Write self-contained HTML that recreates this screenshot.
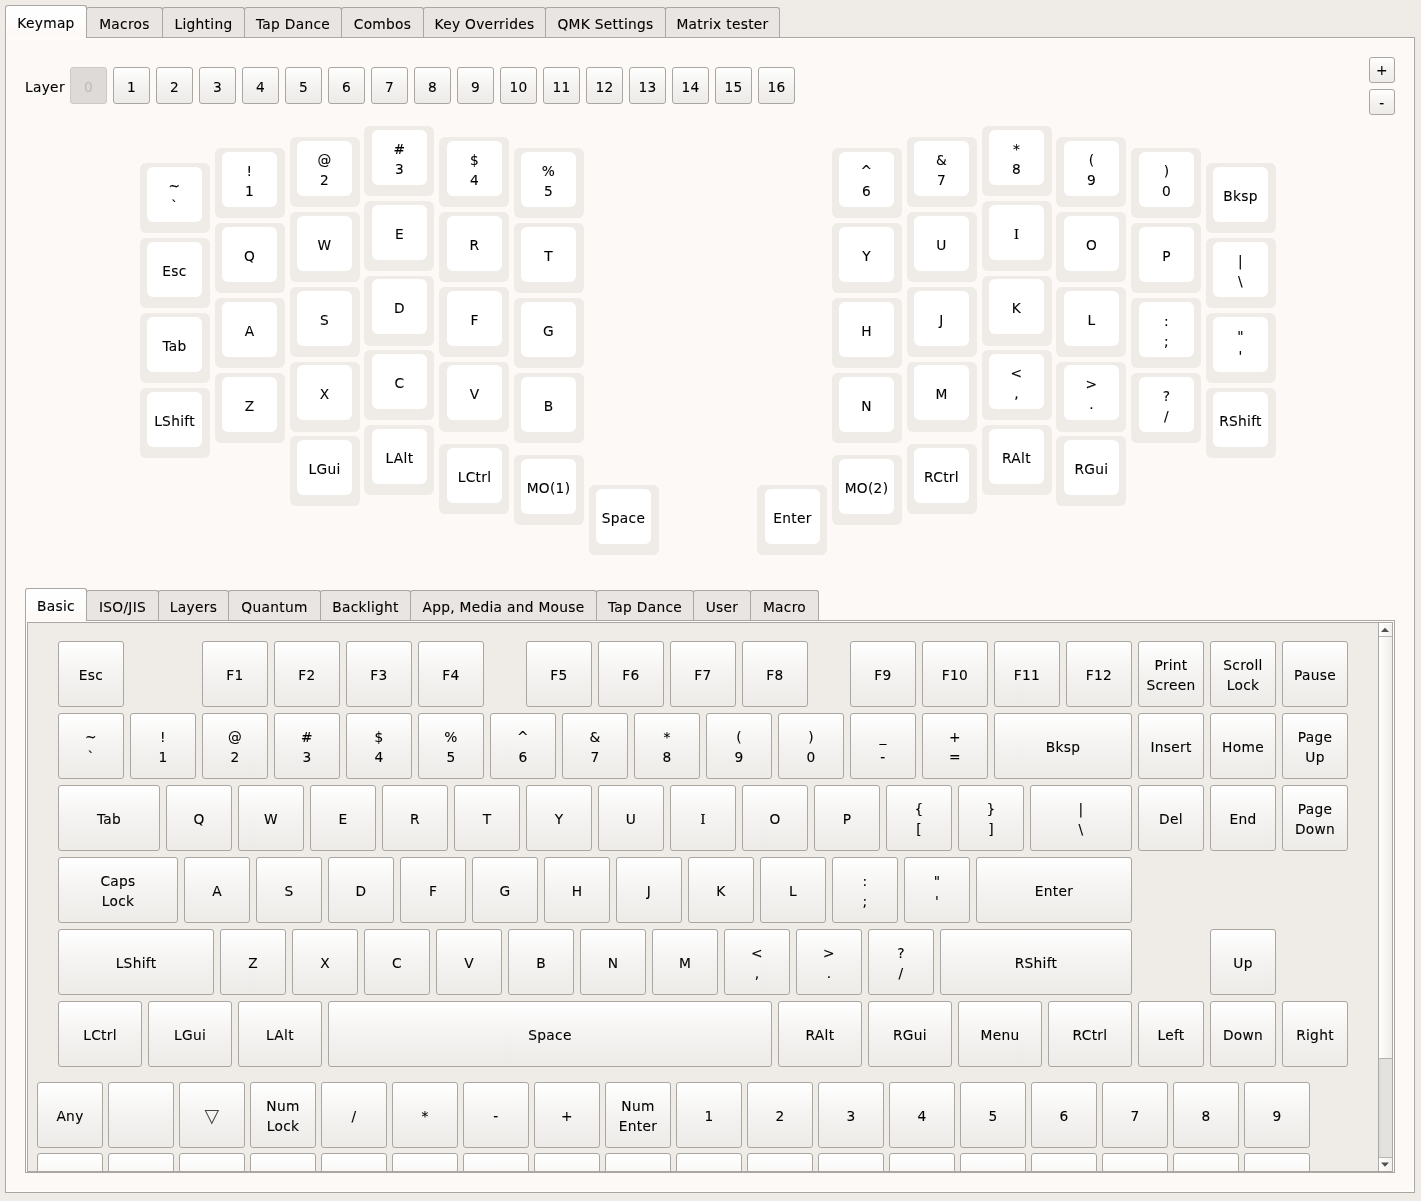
<!DOCTYPE html>
<html><head><meta charset="utf-8"><title>Vial</title><style>
*{box-sizing:border-box;margin:0;padding:0}
html,body{width:1421px;height:1201px;overflow:hidden;background:#efebe7;}
body{position:relative;font-family:"DejaVu Sans", "Liberation Sans", sans-serif;font-size:13.75px;color:#000;line-height:20px;letter-spacing:0.3px;-webkit-text-stroke:0.1px #000}
.abs{position:absolute}
.pane{position:absolute;background:#fcf9f6;border:1px solid #aaa6a2;box-shadow:inset 0 0 0 1px rgba(255,255,255,.75)}
.tab{position:absolute;border:1px solid #aaa6a2;border-bottom:none;border-radius:3px 3px 0 0;background:#e9e5e2;display:flex;align-items:center;justify-content:center;white-space:nowrap}
.tab.sel{background:linear-gradient(#ffffff 0%,#fdfcfb 70%,#fcf9f6 76%);z-index:2;box-shadow:inset 1px 1px 0 rgba(255,255,255,.8)}
.btn{position:absolute;border:1px solid #aaa6a2;border-radius:3px;background:linear-gradient(#ffffff,#f4f3f1 50%,#edebe8);display:flex;align-items:center;justify-content:center;text-align:center;white-space:pre-line}
.btn.dis{background:#dedad7;border-color:#cdc9c5;color:#bdbab7;-webkit-text-stroke:0}
.ko{position:absolute;background:#efebe7;border-radius:6px}
.ki{position:absolute;background:#fff;border-radius:6px;display:flex;align-items:center;justify-content:center;text-align:center;white-space:pre-line}
.t{position:relative;top:0.5px}
.ki .t{top:1.2px}
#root{position:absolute;left:0;top:0;width:1421px;height:1201px;will-change:transform}
</style></head><body>
<div id="root">
<div class="pane" style="left:5px;top:37px;width:1410px;height:1156px"></div>
<div class="tab sel" style="left:5px;top:5px;width:82px;height:33px"><span class="t">Keymap</span></div>
<div class="tab" style="left:86px;top:7px;width:77px;height:30px"><span class="t" style="top:1px">Macros</span></div>
<div class="tab" style="left:162px;top:7px;width:83px;height:30px"><span class="t" style="top:1px">Lighting</span></div>
<div class="tab" style="left:244px;top:7px;width:98px;height:30px"><span class="t" style="top:1px">Tap Dance</span></div>
<div class="tab" style="left:341px;top:7px;width:83px;height:30px"><span class="t" style="top:1px">Combos</span></div>
<div class="tab" style="left:423px;top:7px;width:123px;height:30px"><span class="t" style="top:1px">Key Overrides</span></div>
<div class="tab" style="left:545px;top:7px;width:121px;height:30px"><span class="t" style="top:1px">QMK Settings</span></div>
<div class="tab" style="left:665px;top:7px;width:115px;height:30px"><span class="t" style="top:1px">Matrix tester</span></div>
<div class="abs" style="left:25px;top:76px;white-space:nowrap"><span class="t">Layer</span></div>
<div class="btn dis" style="left:70px;top:67px;width:37px;height:37px"><span class="t" style="top:1.5px">0</span></div>
<div class="btn" style="left:113px;top:67px;width:37px;height:37px"><span class="t" style="top:1.5px">1</span></div>
<div class="btn" style="left:156px;top:67px;width:37px;height:37px"><span class="t" style="top:1.5px">2</span></div>
<div class="btn" style="left:199px;top:67px;width:37px;height:37px"><span class="t" style="top:1.5px">3</span></div>
<div class="btn" style="left:242px;top:67px;width:37px;height:37px"><span class="t" style="top:1.5px">4</span></div>
<div class="btn" style="left:285px;top:67px;width:37px;height:37px"><span class="t" style="top:1.5px">5</span></div>
<div class="btn" style="left:328px;top:67px;width:37px;height:37px"><span class="t" style="top:1.5px">6</span></div>
<div class="btn" style="left:371px;top:67px;width:37px;height:37px"><span class="t" style="top:1.5px">7</span></div>
<div class="btn" style="left:414px;top:67px;width:37px;height:37px"><span class="t" style="top:1.5px">8</span></div>
<div class="btn" style="left:457px;top:67px;width:37px;height:37px"><span class="t" style="top:1.5px">9</span></div>
<div class="btn" style="left:500px;top:67px;width:37px;height:37px"><span class="t" style="top:1.5px">10</span></div>
<div class="btn" style="left:543px;top:67px;width:37px;height:37px"><span class="t" style="top:1.5px">11</span></div>
<div class="btn" style="left:586px;top:67px;width:37px;height:37px"><span class="t" style="top:1.5px">12</span></div>
<div class="btn" style="left:629px;top:67px;width:37px;height:37px"><span class="t" style="top:1.5px">13</span></div>
<div class="btn" style="left:672px;top:67px;width:37px;height:37px"><span class="t" style="top:1.5px">14</span></div>
<div class="btn" style="left:715px;top:67px;width:37px;height:37px"><span class="t" style="top:1.5px">15</span></div>
<div class="btn" style="left:758px;top:67px;width:37px;height:37px"><span class="t" style="top:1.5px">16</span></div>
<div class="btn" style="left:1369px;top:57px;width:26px;height:26px"><span class="t" style="top:-0.5px">+</span></div>
<div class="btn" style="left:1369px;top:89px;width:26px;height:26px"><span class="t">-</span></div>
<div class="ko" style="left:140px;top:163px;width:70px;height:70px"></div>
<div class="ki" style="left:147px;top:167px;width:55px;height:55px"><span class="t">~
`</span></div>
<div class="ko" style="left:140px;top:238px;width:70px;height:70px"></div>
<div class="ki" style="left:147px;top:242px;width:55px;height:55px"><span class="t">Esc</span></div>
<div class="ko" style="left:140px;top:313px;width:70px;height:70px"></div>
<div class="ki" style="left:147px;top:317px;width:55px;height:55px"><span class="t">Tab</span></div>
<div class="ko" style="left:140px;top:388px;width:70px;height:70px"></div>
<div class="ki" style="left:147px;top:392px;width:55px;height:55px"><span class="t">LShift</span></div>
<div class="ko" style="left:215px;top:148px;width:70px;height:70px"></div>
<div class="ki" style="left:222px;top:152px;width:55px;height:55px"><span class="t">!
1</span></div>
<div class="ko" style="left:215px;top:223px;width:70px;height:70px"></div>
<div class="ki" style="left:222px;top:227px;width:55px;height:55px"><span class="t">Q</span></div>
<div class="ko" style="left:215px;top:298px;width:70px;height:70px"></div>
<div class="ki" style="left:222px;top:302px;width:55px;height:55px"><span class="t">A</span></div>
<div class="ko" style="left:215px;top:373px;width:70px;height:70px"></div>
<div class="ki" style="left:222px;top:377px;width:55px;height:55px"><span class="t">Z</span></div>
<div class="ko" style="left:290px;top:137px;width:70px;height:70px"></div>
<div class="ki" style="left:297px;top:141px;width:55px;height:55px"><span class="t">@
2</span></div>
<div class="ko" style="left:290px;top:212px;width:70px;height:70px"></div>
<div class="ki" style="left:297px;top:216px;width:55px;height:55px"><span class="t">W</span></div>
<div class="ko" style="left:290px;top:287px;width:70px;height:70px"></div>
<div class="ki" style="left:297px;top:291px;width:55px;height:55px"><span class="t">S</span></div>
<div class="ko" style="left:290px;top:362px;width:70px;height:70px"></div>
<div class="ki" style="left:297px;top:365px;width:55px;height:55px"><span class="t">X</span></div>
<div class="ko" style="left:364px;top:126px;width:70px;height:70px"></div>
<div class="ki" style="left:372px;top:130px;width:55px;height:55px"><span class="t">#
3</span></div>
<div class="ko" style="left:364px;top:201px;width:70px;height:70px"></div>
<div class="ki" style="left:372px;top:205px;width:55px;height:55px"><span class="t">E</span></div>
<div class="ko" style="left:364px;top:276px;width:70px;height:70px"></div>
<div class="ki" style="left:372px;top:279px;width:55px;height:55px"><span class="t">D</span></div>
<div class="ko" style="left:364px;top:350px;width:70px;height:70px"></div>
<div class="ki" style="left:372px;top:354px;width:55px;height:55px"><span class="t">C</span></div>
<div class="ko" style="left:439px;top:137px;width:70px;height:70px"></div>
<div class="ki" style="left:447px;top:141px;width:55px;height:55px"><span class="t">$
4</span></div>
<div class="ko" style="left:439px;top:212px;width:70px;height:70px"></div>
<div class="ki" style="left:447px;top:216px;width:55px;height:55px"><span class="t">R</span></div>
<div class="ko" style="left:439px;top:287px;width:70px;height:70px"></div>
<div class="ki" style="left:447px;top:291px;width:55px;height:55px"><span class="t">F</span></div>
<div class="ko" style="left:439px;top:362px;width:70px;height:70px"></div>
<div class="ki" style="left:447px;top:365px;width:55px;height:55px"><span class="t">V</span></div>
<div class="ko" style="left:514px;top:148px;width:70px;height:70px"></div>
<div class="ki" style="left:521px;top:152px;width:55px;height:55px"><span class="t">%
5</span></div>
<div class="ko" style="left:514px;top:223px;width:70px;height:70px"></div>
<div class="ki" style="left:521px;top:227px;width:55px;height:55px"><span class="t">T</span></div>
<div class="ko" style="left:514px;top:298px;width:70px;height:70px"></div>
<div class="ki" style="left:521px;top:302px;width:55px;height:55px"><span class="t">G</span></div>
<div class="ko" style="left:514px;top:373px;width:70px;height:70px"></div>
<div class="ki" style="left:521px;top:377px;width:55px;height:55px"><span class="t">B</span></div>
<div class="ko" style="left:290px;top:436px;width:70px;height:70px"></div>
<div class="ki" style="left:297px;top:440px;width:55px;height:55px"><span class="t">LGui</span></div>
<div class="ko" style="left:364px;top:425px;width:70px;height:70px"></div>
<div class="ki" style="left:372px;top:429px;width:55px;height:55px"><span class="t">LAlt</span></div>
<div class="ko" style="left:439px;top:444px;width:70px;height:70px"></div>
<div class="ki" style="left:447px;top:448px;width:55px;height:55px"><span class="t">LCtrl</span></div>
<div class="ko" style="left:514px;top:455px;width:70px;height:70px"></div>
<div class="ki" style="left:521px;top:459px;width:55px;height:55px"><span class="t">MO(1)</span></div>
<div class="ko" style="left:589px;top:485px;width:70px;height:70px"></div>
<div class="ki" style="left:596px;top:489px;width:55px;height:55px"><span class="t">Space</span></div>
<div class="ko" style="left:832px;top:148px;width:70px;height:70px"></div>
<div class="ki" style="left:839px;top:152px;width:55px;height:55px"><span class="t">^
6</span></div>
<div class="ko" style="left:832px;top:223px;width:70px;height:70px"></div>
<div class="ki" style="left:839px;top:227px;width:55px;height:55px"><span class="t">Y</span></div>
<div class="ko" style="left:832px;top:298px;width:70px;height:70px"></div>
<div class="ki" style="left:839px;top:302px;width:55px;height:55px"><span class="t">H</span></div>
<div class="ko" style="left:832px;top:373px;width:70px;height:70px"></div>
<div class="ki" style="left:839px;top:377px;width:55px;height:55px"><span class="t">N</span></div>
<div class="ko" style="left:907px;top:137px;width:70px;height:70px"></div>
<div class="ki" style="left:914px;top:141px;width:55px;height:55px"><span class="t">&amp;
7</span></div>
<div class="ko" style="left:907px;top:212px;width:70px;height:70px"></div>
<div class="ki" style="left:914px;top:216px;width:55px;height:55px"><span class="t">U</span></div>
<div class="ko" style="left:907px;top:287px;width:70px;height:70px"></div>
<div class="ki" style="left:914px;top:291px;width:55px;height:55px"><span class="t">J</span></div>
<div class="ko" style="left:907px;top:362px;width:70px;height:70px"></div>
<div class="ki" style="left:914px;top:365px;width:55px;height:55px"><span class="t">M</span></div>
<div class="ko" style="left:982px;top:126px;width:70px;height:70px"></div>
<div class="ki" style="left:989px;top:130px;width:55px;height:55px"><span class="t">*
8</span></div>
<div class="ko" style="left:982px;top:201px;width:70px;height:70px"></div>
<div class="ki" style="left:989px;top:205px;width:55px;height:55px"><span class="t" style="font-family:'DejaVu Serif','Liberation Serif',serif">I</span></div>
<div class="ko" style="left:982px;top:276px;width:70px;height:70px"></div>
<div class="ki" style="left:989px;top:279px;width:55px;height:55px"><span class="t">K</span></div>
<div class="ko" style="left:982px;top:350px;width:70px;height:70px"></div>
<div class="ki" style="left:989px;top:354px;width:55px;height:55px"><span class="t">&lt;
,</span></div>
<div class="ko" style="left:1056px;top:137px;width:70px;height:70px"></div>
<div class="ki" style="left:1064px;top:141px;width:55px;height:55px"><span class="t">(
9</span></div>
<div class="ko" style="left:1056px;top:212px;width:70px;height:70px"></div>
<div class="ki" style="left:1064px;top:216px;width:55px;height:55px"><span class="t">O</span></div>
<div class="ko" style="left:1056px;top:287px;width:70px;height:70px"></div>
<div class="ki" style="left:1064px;top:291px;width:55px;height:55px"><span class="t">L</span></div>
<div class="ko" style="left:1056px;top:362px;width:70px;height:70px"></div>
<div class="ki" style="left:1064px;top:365px;width:55px;height:55px"><span class="t">&gt;
.</span></div>
<div class="ko" style="left:1131px;top:148px;width:70px;height:70px"></div>
<div class="ki" style="left:1139px;top:152px;width:55px;height:55px"><span class="t">)
0</span></div>
<div class="ko" style="left:1131px;top:223px;width:70px;height:70px"></div>
<div class="ki" style="left:1139px;top:227px;width:55px;height:55px"><span class="t">P</span></div>
<div class="ko" style="left:1131px;top:298px;width:70px;height:70px"></div>
<div class="ki" style="left:1139px;top:302px;width:55px;height:55px"><span class="t">:
;</span></div>
<div class="ko" style="left:1131px;top:373px;width:70px;height:70px"></div>
<div class="ki" style="left:1139px;top:377px;width:55px;height:55px"><span class="t">?
/</span></div>
<div class="ko" style="left:1206px;top:163px;width:70px;height:70px"></div>
<div class="ki" style="left:1213px;top:167px;width:55px;height:55px"><span class="t">Bksp</span></div>
<div class="ko" style="left:1206px;top:238px;width:70px;height:70px"></div>
<div class="ki" style="left:1213px;top:242px;width:55px;height:55px"><span class="t">|
\</span></div>
<div class="ko" style="left:1206px;top:313px;width:70px;height:70px"></div>
<div class="ki" style="left:1213px;top:317px;width:55px;height:55px"><span class="t">&quot;
&#x27;</span></div>
<div class="ko" style="left:1206px;top:388px;width:70px;height:70px"></div>
<div class="ki" style="left:1213px;top:392px;width:55px;height:55px"><span class="t">RShift</span></div>
<div class="ko" style="left:757px;top:485px;width:70px;height:70px"></div>
<div class="ki" style="left:765px;top:489px;width:55px;height:55px"><span class="t">Enter</span></div>
<div class="ko" style="left:832px;top:455px;width:70px;height:70px"></div>
<div class="ki" style="left:839px;top:459px;width:55px;height:55px"><span class="t">MO(2)</span></div>
<div class="ko" style="left:907px;top:444px;width:70px;height:70px"></div>
<div class="ki" style="left:914px;top:448px;width:55px;height:55px"><span class="t">RCtrl</span></div>
<div class="ko" style="left:982px;top:425px;width:70px;height:70px"></div>
<div class="ki" style="left:989px;top:429px;width:55px;height:55px"><span class="t">RAlt</span></div>
<div class="ko" style="left:1056px;top:436px;width:70px;height:70px"></div>
<div class="ki" style="left:1064px;top:440px;width:55px;height:55px"><span class="t">RGui</span></div>
<div class="pane" style="left:25px;top:620px;width:1370px;height:553px"></div>
<div class="abs" style="left:27px;top:622px;width:1366px;height:550px;border:1px solid #aaa6a2;background:#efebe7;overflow:hidden" id="scroll">
<div class="btn" style="left:30px;top:18px;width:66px;height:66px"><span class="t">Esc</span></div>
<div class="btn" style="left:174px;top:18px;width:66px;height:66px"><span class="t">F1</span></div>
<div class="btn" style="left:246px;top:18px;width:66px;height:66px"><span class="t">F2</span></div>
<div class="btn" style="left:318px;top:18px;width:66px;height:66px"><span class="t">F3</span></div>
<div class="btn" style="left:390px;top:18px;width:66px;height:66px"><span class="t">F4</span></div>
<div class="btn" style="left:498.0px;top:18px;width:66px;height:66px"><span class="t">F5</span></div>
<div class="btn" style="left:570.0px;top:18px;width:66px;height:66px"><span class="t">F6</span></div>
<div class="btn" style="left:642.0px;top:18px;width:66px;height:66px"><span class="t">F7</span></div>
<div class="btn" style="left:714.0px;top:18px;width:66px;height:66px"><span class="t">F8</span></div>
<div class="btn" style="left:822.0px;top:18px;width:66px;height:66px"><span class="t">F9</span></div>
<div class="btn" style="left:894.0px;top:18px;width:66px;height:66px"><span class="t">F10</span></div>
<div class="btn" style="left:966.0px;top:18px;width:66px;height:66px"><span class="t">F11</span></div>
<div class="btn" style="left:1038.0px;top:18px;width:66px;height:66px"><span class="t">F12</span></div>
<div class="btn" style="left:1110.0px;top:18px;width:66px;height:66px"><span class="t">Print
Screen</span></div>
<div class="btn" style="left:1182.0px;top:18px;width:66px;height:66px"><span class="t">Scroll
Lock</span></div>
<div class="btn" style="left:1254.0px;top:18px;width:66px;height:66px"><span class="t">Pause</span></div>
<div class="btn" style="left:30px;top:90px;width:66px;height:66px"><span class="t">~
`</span></div>
<div class="btn" style="left:102px;top:90px;width:66px;height:66px"><span class="t">!
1</span></div>
<div class="btn" style="left:174px;top:90px;width:66px;height:66px"><span class="t">@
2</span></div>
<div class="btn" style="left:246px;top:90px;width:66px;height:66px"><span class="t">#
3</span></div>
<div class="btn" style="left:318px;top:90px;width:66px;height:66px"><span class="t">$
4</span></div>
<div class="btn" style="left:390px;top:90px;width:66px;height:66px"><span class="t">%
5</span></div>
<div class="btn" style="left:462px;top:90px;width:66px;height:66px"><span class="t">^
6</span></div>
<div class="btn" style="left:534px;top:90px;width:66px;height:66px"><span class="t">&amp;
7</span></div>
<div class="btn" style="left:606px;top:90px;width:66px;height:66px"><span class="t">*
8</span></div>
<div class="btn" style="left:678px;top:90px;width:66px;height:66px"><span class="t">(
9</span></div>
<div class="btn" style="left:750px;top:90px;width:66px;height:66px"><span class="t">)
0</span></div>
<div class="btn" style="left:822px;top:90px;width:66px;height:66px"><span class="t">_
-</span></div>
<div class="btn" style="left:894px;top:90px;width:66px;height:66px"><span class="t">+
=</span></div>
<div class="btn" style="left:966px;top:90px;width:138px;height:66px"><span class="t">Bksp</span></div>
<div class="btn" style="left:1110px;top:90px;width:66px;height:66px"><span class="t">Insert</span></div>
<div class="btn" style="left:1182px;top:90px;width:66px;height:66px"><span class="t">Home</span></div>
<div class="btn" style="left:1254px;top:90px;width:66px;height:66px"><span class="t">Page
Up</span></div>
<div class="btn" style="left:30px;top:162px;width:102px;height:66px"><span class="t">Tab</span></div>
<div class="btn" style="left:138.0px;top:162px;width:66px;height:66px"><span class="t">Q</span></div>
<div class="btn" style="left:210.0px;top:162px;width:66px;height:66px"><span class="t">W</span></div>
<div class="btn" style="left:282.0px;top:162px;width:66px;height:66px"><span class="t">E</span></div>
<div class="btn" style="left:354.0px;top:162px;width:66px;height:66px"><span class="t">R</span></div>
<div class="btn" style="left:426.0px;top:162px;width:66px;height:66px"><span class="t">T</span></div>
<div class="btn" style="left:498.0px;top:162px;width:66px;height:66px"><span class="t">Y</span></div>
<div class="btn" style="left:570.0px;top:162px;width:66px;height:66px"><span class="t">U</span></div>
<div class="btn" style="left:642.0px;top:162px;width:66px;height:66px"><span class="t" style="font-family:'DejaVu Serif','Liberation Serif',serif">I</span></div>
<div class="btn" style="left:714.0px;top:162px;width:66px;height:66px"><span class="t">O</span></div>
<div class="btn" style="left:786.0px;top:162px;width:66px;height:66px"><span class="t">P</span></div>
<div class="btn" style="left:858.0px;top:162px;width:66px;height:66px"><span class="t">{
[</span></div>
<div class="btn" style="left:930.0px;top:162px;width:66px;height:66px"><span class="t">}
]</span></div>
<div class="btn" style="left:1002.0px;top:162px;width:102px;height:66px"><span class="t">|
\</span></div>
<div class="btn" style="left:1110.0px;top:162px;width:66px;height:66px"><span class="t">Del</span></div>
<div class="btn" style="left:1182.0px;top:162px;width:66px;height:66px"><span class="t">End</span></div>
<div class="btn" style="left:1254.0px;top:162px;width:66px;height:66px"><span class="t">Page
Down</span></div>
<div class="btn" style="left:30px;top:234px;width:120px;height:66px"><span class="t">Caps
Lock</span></div>
<div class="btn" style="left:156.0px;top:234px;width:66px;height:66px"><span class="t">A</span></div>
<div class="btn" style="left:228.0px;top:234px;width:66px;height:66px"><span class="t">S</span></div>
<div class="btn" style="left:300.0px;top:234px;width:66px;height:66px"><span class="t">D</span></div>
<div class="btn" style="left:372.0px;top:234px;width:66px;height:66px"><span class="t">F</span></div>
<div class="btn" style="left:444.0px;top:234px;width:66px;height:66px"><span class="t">G</span></div>
<div class="btn" style="left:516.0px;top:234px;width:66px;height:66px"><span class="t">H</span></div>
<div class="btn" style="left:588.0px;top:234px;width:66px;height:66px"><span class="t">J</span></div>
<div class="btn" style="left:660.0px;top:234px;width:66px;height:66px"><span class="t">K</span></div>
<div class="btn" style="left:732.0px;top:234px;width:66px;height:66px"><span class="t">L</span></div>
<div class="btn" style="left:804.0px;top:234px;width:66px;height:66px"><span class="t">:
;</span></div>
<div class="btn" style="left:876.0px;top:234px;width:66px;height:66px"><span class="t">&quot;
&#x27;</span></div>
<div class="btn" style="left:948.0px;top:234px;width:156px;height:66px"><span class="t">Enter</span></div>
<div class="btn" style="left:30px;top:306px;width:156px;height:66px"><span class="t">LShift</span></div>
<div class="btn" style="left:192.0px;top:306px;width:66px;height:66px"><span class="t">Z</span></div>
<div class="btn" style="left:264.0px;top:306px;width:66px;height:66px"><span class="t">X</span></div>
<div class="btn" style="left:336.0px;top:306px;width:66px;height:66px"><span class="t">C</span></div>
<div class="btn" style="left:408.0px;top:306px;width:66px;height:66px"><span class="t">V</span></div>
<div class="btn" style="left:480.0px;top:306px;width:66px;height:66px"><span class="t">B</span></div>
<div class="btn" style="left:552.0px;top:306px;width:66px;height:66px"><span class="t">N</span></div>
<div class="btn" style="left:624.0px;top:306px;width:66px;height:66px"><span class="t">M</span></div>
<div class="btn" style="left:696.0px;top:306px;width:66px;height:66px"><span class="t">&lt;
,</span></div>
<div class="btn" style="left:768.0px;top:306px;width:66px;height:66px"><span class="t">&gt;
.</span></div>
<div class="btn" style="left:840.0px;top:306px;width:66px;height:66px"><span class="t">?
/</span></div>
<div class="btn" style="left:912.0px;top:306px;width:192px;height:66px"><span class="t">RShift</span></div>
<div class="btn" style="left:1182.0px;top:306px;width:66px;height:66px"><span class="t">Up</span></div>
<div class="btn" style="left:30px;top:378px;width:84px;height:66px"><span class="t">LCtrl</span></div>
<div class="btn" style="left:120.0px;top:378px;width:84px;height:66px"><span class="t">LGui</span></div>
<div class="btn" style="left:210.0px;top:378px;width:84px;height:66px"><span class="t">LAlt</span></div>
<div class="btn" style="left:300.0px;top:378px;width:444px;height:66px"><span class="t">Space</span></div>
<div class="btn" style="left:750.0px;top:378px;width:84px;height:66px"><span class="t">RAlt</span></div>
<div class="btn" style="left:840.0px;top:378px;width:84px;height:66px"><span class="t">RGui</span></div>
<div class="btn" style="left:930.0px;top:378px;width:84px;height:66px"><span class="t">Menu</span></div>
<div class="btn" style="left:1020.0px;top:378px;width:84px;height:66px"><span class="t">RCtrl</span></div>
<div class="btn" style="left:1110.0px;top:378px;width:66px;height:66px"><span class="t">Left</span></div>
<div class="btn" style="left:1182.0px;top:378px;width:66px;height:66px"><span class="t">Down</span></div>
<div class="btn" style="left:1254.0px;top:378px;width:66px;height:66px"><span class="t">Right</span></div>
<div class="btn" style="left:9px;top:459px;width:66px;height:66px"><span class="t">Any</span></div>
<div class="btn" style="left:80px;top:459px;width:66px;height:66px"><span class="t"></span></div>
<div class="btn" style="left:151px;top:459px;width:66px;height:66px"><span class="t" style="font-size:19px;top:0px;color:#444;-webkit-text-stroke:0">▽</span></div>
<div class="btn" style="left:222px;top:459px;width:66px;height:66px"><span class="t">Num
Lock</span></div>
<div class="btn" style="left:293px;top:459px;width:66px;height:66px"><span class="t">/</span></div>
<div class="btn" style="left:364px;top:459px;width:66px;height:66px"><span class="t">*</span></div>
<div class="btn" style="left:435px;top:459px;width:66px;height:66px"><span class="t">-</span></div>
<div class="btn" style="left:506px;top:459px;width:66px;height:66px"><span class="t">+</span></div>
<div class="btn" style="left:577px;top:459px;width:66px;height:66px"><span class="t">Num
Enter</span></div>
<div class="btn" style="left:648px;top:459px;width:66px;height:66px"><span class="t">1</span></div>
<div class="btn" style="left:719px;top:459px;width:66px;height:66px"><span class="t">2</span></div>
<div class="btn" style="left:790px;top:459px;width:66px;height:66px"><span class="t">3</span></div>
<div class="btn" style="left:861px;top:459px;width:66px;height:66px"><span class="t">4</span></div>
<div class="btn" style="left:932px;top:459px;width:66px;height:66px"><span class="t">5</span></div>
<div class="btn" style="left:1003px;top:459px;width:66px;height:66px"><span class="t">6</span></div>
<div class="btn" style="left:1074px;top:459px;width:66px;height:66px"><span class="t">7</span></div>
<div class="btn" style="left:1145px;top:459px;width:66px;height:66px"><span class="t">8</span></div>
<div class="btn" style="left:1216px;top:459px;width:66px;height:66px"><span class="t">9</span></div>
<div class="btn" style="left:9px;top:530px;width:66px;height:66px"><span class="t"></span></div>
<div class="btn" style="left:80px;top:530px;width:66px;height:66px"><span class="t"></span></div>
<div class="btn" style="left:151px;top:530px;width:66px;height:66px"><span class="t"></span></div>
<div class="btn" style="left:222px;top:530px;width:66px;height:66px"><span class="t"></span></div>
<div class="btn" style="left:293px;top:530px;width:66px;height:66px"><span class="t"></span></div>
<div class="btn" style="left:364px;top:530px;width:66px;height:66px"><span class="t"></span></div>
<div class="btn" style="left:435px;top:530px;width:66px;height:66px"><span class="t"></span></div>
<div class="btn" style="left:506px;top:530px;width:66px;height:66px"><span class="t"></span></div>
<div class="btn" style="left:577px;top:530px;width:66px;height:66px"><span class="t"></span></div>
<div class="btn" style="left:648px;top:530px;width:66px;height:66px"><span class="t"></span></div>
<div class="btn" style="left:719px;top:530px;width:66px;height:66px"><span class="t"></span></div>
<div class="btn" style="left:790px;top:530px;width:66px;height:66px"><span class="t"></span></div>
<div class="btn" style="left:861px;top:530px;width:66px;height:66px"><span class="t"></span></div>
<div class="btn" style="left:932px;top:530px;width:66px;height:66px"><span class="t"></span></div>
<div class="btn" style="left:1003px;top:530px;width:66px;height:66px"><span class="t"></span></div>
<div class="btn" style="left:1074px;top:530px;width:66px;height:66px"><span class="t"></span></div>
<div class="btn" style="left:1145px;top:530px;width:66px;height:66px"><span class="t"></span></div>
<div class="btn" style="left:1216px;top:530px;width:66px;height:66px"><span class="t"></span></div>
<div class="abs" style="left:1350px;top:0;width:14px;height:548px;background:linear-gradient(90deg,#dedbd8,#e4e2df 30%,#e4e2df);border-left:1px solid #aaa6a2"></div>
<div class="abs" style="left:1351px;top:0;width:13px;height:14px;background:linear-gradient(90deg,#fff,#fbfaf9 30%,#f2f0ee);border-bottom:1px solid #b9b5b2;box-shadow:inset 1px 1px 0 #fff"></div>
<div class="abs" style="left:1351px;top:14px;width:13px;height:422px;background:linear-gradient(90deg,#fff,#fbfaf9 30%,#f0edea);border-bottom:1px solid #b5b1ae"></div>
<div class="abs" style="left:1351px;top:534px;width:13px;height:14px;background:linear-gradient(90deg,#fff,#fbfaf9 30%,#f2f0ee);border-top:1px solid #b9b5b2"></div>
<svg class="abs" style="left:1351px;top:0" width="13" height="14"><path d="M2 9 L6 4.7 L10 9 Z" fill="#505050"/></svg>
<svg class="abs" style="left:1351px;top:535px" width="13" height="14"><path d="M2 4.5 L6 8.8 L10 4.5 Z" fill="#505050"/></svg>
</div>
<div class="tab sel" style="left:25px;top:588px;width:62px;height:33px"><span class="t">Basic</span></div>
<div class="tab" style="left:86px;top:590px;width:73px;height:30px"><span class="t" style="top:1px">ISO/JIS</span></div>
<div class="tab" style="left:158px;top:590px;width:71px;height:30px"><span class="t" style="top:1px">Layers</span></div>
<div class="tab" style="left:228px;top:590px;width:93px;height:30px"><span class="t" style="top:1px">Quantum</span></div>
<div class="tab" style="left:320px;top:590px;width:91px;height:30px"><span class="t" style="top:1px">Backlight</span></div>
<div class="tab" style="left:410px;top:590px;width:187px;height:30px"><span class="t" style="top:1px">App, Media and Mouse</span></div>
<div class="tab" style="left:596px;top:590px;width:98px;height:30px"><span class="t" style="top:1px">Tap Dance</span></div>
<div class="tab" style="left:693px;top:590px;width:58px;height:30px"><span class="t" style="top:1px">User</span></div>
<div class="tab" style="left:750px;top:590px;width:69px;height:30px"><span class="t" style="top:1px">Macro</span></div>
</div>
</body></html>
